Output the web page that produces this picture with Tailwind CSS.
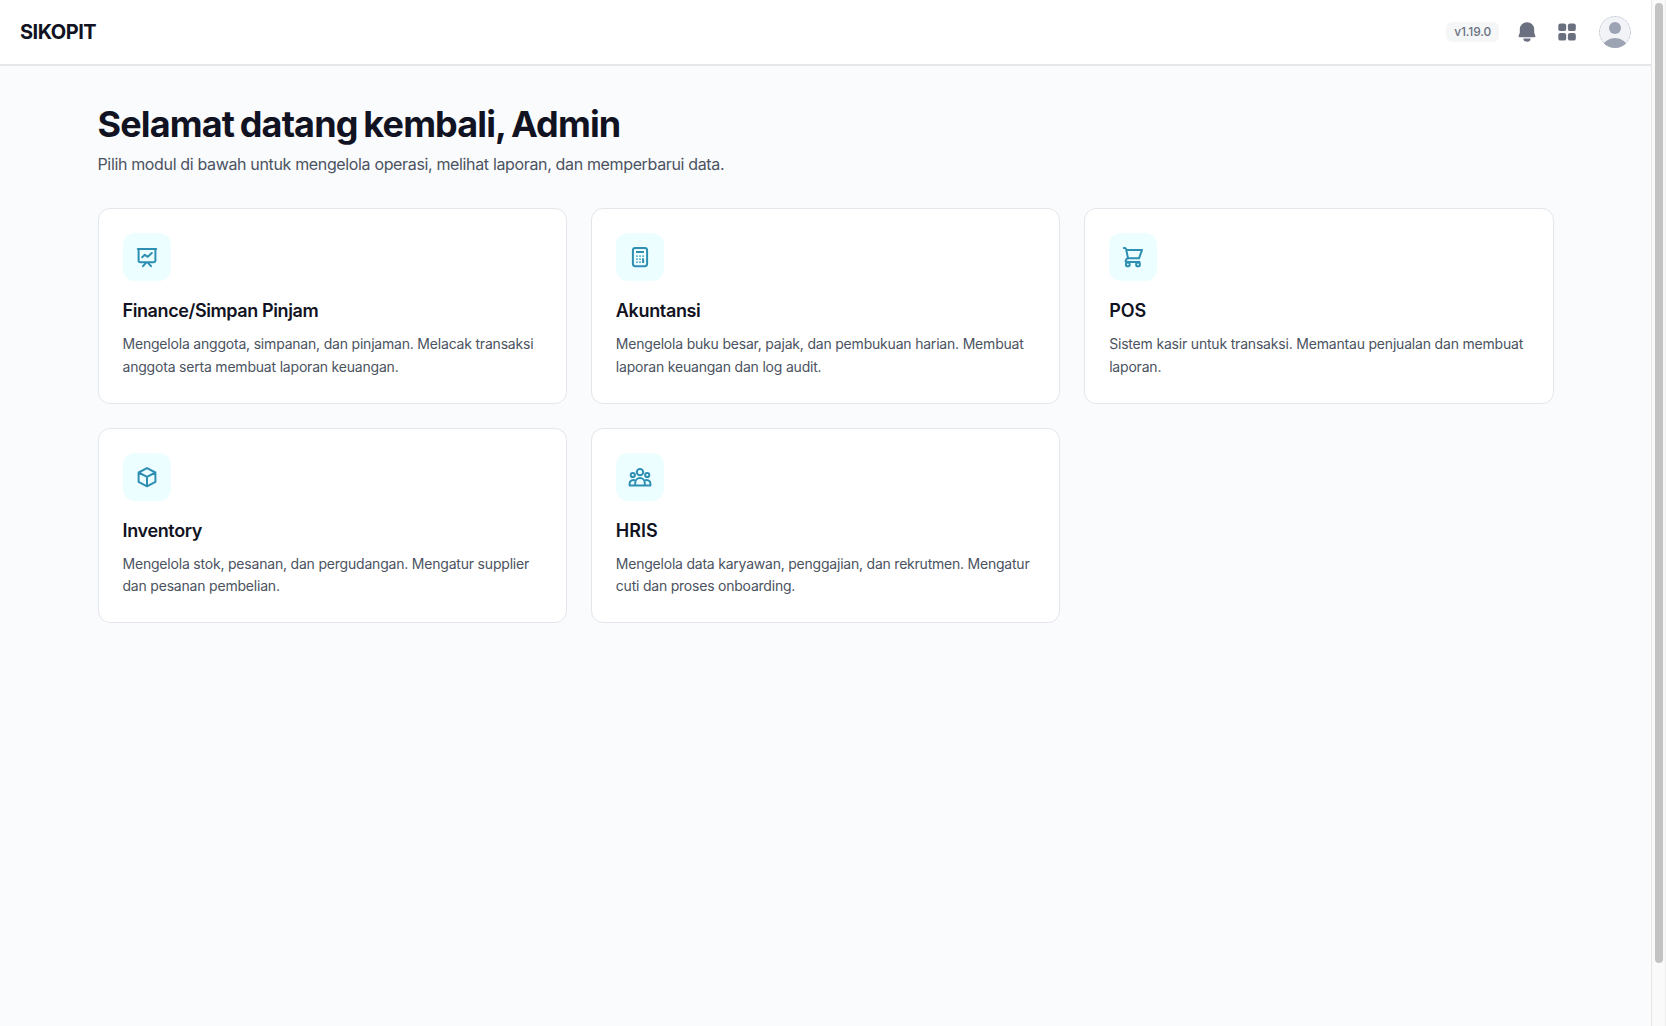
<!DOCTYPE html>
<html lang="id">
<head>
    <meta charset="utf-8">
    <title>SIKOPIT</title>
    <script src="https://cdn.jsdelivr.net/npm/@tailwindcss/browser@4"></script>
</head>
<body class="flex h-screen overflow-hidden bg-[#fafbfd] font-['Inter',sans-serif] text-[#111322] antialiased">
    <div class="flex-1 min-w-0">
        <header class="flex h-[66px] items-center justify-between border-b-2 border-[#e5e7ea] bg-white px-5">
            <a class="text-xl font-bold tracking-tight">SIKOPIT</a>
            <div class="flex items-center">
                <span class="rounded-md bg-[#f5f6f8] px-2 py-0.5 text-xs font-medium tracking-[-0.15px] text-[#6a7180]">v1.19.0</span>
                <svg class="ml-4 size-6 text-[#6a7080]" viewBox="0 0 24 24" fill="currentColor">
                    <path d="M12 2.2a7.2 7.2 0 0 0-7.2 7.2v3.4L3.7 15.8c-.3.8.2 1.4.9 1.4h14.8c.7 0 1.2-.6.9-1.4l-1.1-3V9.4A7.2 7.2 0 0 0 12 2.2Z"/>
                    <path d="M8.4 18.4h7.2a3.6 3.3 0 0 1-7.2 0Z"/>
                </svg>
                <svg class="ml-4 size-6 text-[#6a7080]" viewBox="0 0 24 24" fill="currentColor">
                    <rect x="3.3" y="3.4" width="7.9" height="7.7" rx="2.2"/>
                    <rect x="12.9" y="3.4" width="7.9" height="7.7" rx="2.2"/>
                    <rect x="3.3" y="12.9" width="7.9" height="7.7" rx="2.2"/>
                    <rect x="12.9" y="12.9" width="7.9" height="7.7" rx="2.2"/>
                </svg>
                <svg class="ml-5 size-8 rounded-full bg-[#f1f3f7]" viewBox="0 0 32 32" fill="#9ca3b2">
                    <circle cx="16" cy="12" r="6"/>
                    <ellipse cx="16" cy="32" rx="12.5" ry="10"/>
                    <circle cx="16" cy="16" r="15.6" fill="none" stroke="#a5abb8" stroke-width=".6" stroke-dasharray="3 1"/>
                </svg>
            </div>
        </header>

        <main class="mx-auto max-w-[1536px] px-10 pt-[38px]">
            <h1 class="text-4xl font-bold tracking-[-0.88px] [word-spacing:-1.8px]">Selamat datang kembali, Admin</h1>
            <p class="mt-2 text-base tracking-[-0.35px] text-[#4b5361]">Pilih modul di bawah untuk mengelola operasi, melihat laporan, dan memperbarui data.</p>

            <div class="mt-8 grid grid-cols-3 gap-6">
                <a class="rounded-xl border border-[#e3e6ea] bg-white p-6">
                    <div class="flex size-12 items-center justify-center rounded-xl bg-[#ecfeff] text-[#2f8fb3]">
                        <svg class="size-6" viewBox="0 0 24 24" fill="none" stroke="currentColor" stroke-width="2" stroke-linecap="round" stroke-linejoin="round">
                            <path d="M3.6 3.9v11.6a1.8 1.8 0 0 0 1.8 1.8h13.2a1.8 1.8 0 0 0 1.8-1.8V3.9M2.8 3.9h18.4M11 17.8l-3 3.4M13 17.8l3 3.4"/>
                            <path d="m7.2 12.2 2.6-2.4 3 2 4-3.8"/>
                        </svg>
                    </div>
                    <h2 class="mt-4 text-lg font-semibold tracking-[-0.4px]">Finance/Simpan Pinjam</h2>
                    <p class="mt-2 text-sm leading-relaxed tracking-[-0.2px] text-[#4b5361]">Mengelola anggota, simpanan, dan pinjaman. Melacak transaksi anggota serta membuat laporan keuangan.</p>
                </a>

                <a class="rounded-xl border border-[#e3e6ea] bg-white p-6">
                    <div class="flex size-12 items-center justify-center rounded-xl bg-[#ecfeff] text-[#2f8fb3]">
                        <svg class="size-6" viewBox="0 0 24 24" fill="none" stroke="currentColor" stroke-width="2">
                            <rect x="4.9" y="3" width="14.2" height="18.2" rx="2.4"/>
                            <path d="M8 7h8"/>
                            <path d="M8.1 11.2h1.7m1.4 0h1.7m1.4 0h1.7M8.1 14.2h1.7m1.4 0h1.7M8.1 17.2h1.7m1.4 0h1.7" stroke-width="1.7" opacity=".75"/>
                            <path d="M15.1 13.3V18"/>
                        </svg>
                    </div>
                    <h2 class="mt-4 text-lg font-semibold tracking-[-0.35px]">Akuntansi</h2>
                    <p class="mt-2 text-sm leading-relaxed tracking-[-0.2px] text-[#4b5361]">Mengelola buku besar, pajak, dan pembukuan harian. Membuat laporan keuangan dan log audit.</p>
                </a>

                <a class="rounded-xl border border-[#e3e6ea] bg-white p-6">
                    <div class="flex size-12 items-center justify-center rounded-xl bg-[#ecfeff] text-[#2f8fb3]">
                        <svg class="size-6" viewBox="0 0 24 24" fill="none" stroke="currentColor" stroke-width="2" stroke-linecap="round" stroke-linejoin="round">
                            <path d="M2.8 3h1c.7 0 1.1.4 1.3 1L7 13.3h11L21 4.9H5.3"/>
                            <path d="M7 13.3C4.6 13.9 4.2 16.9 5 16.9h13.6"/>
                            <circle cx="6.8" cy="19.4" r="1.9"/><circle cx="17" cy="19.4" r="1.9"/>
                        </svg>
                    </div>
                    <h2 class="mt-4 text-lg font-semibold">POS</h2>
                    <p class="mt-2 text-sm leading-relaxed tracking-[-0.19px] text-[#4b5361]">Sistem kasir untuk transaksi. Memantau penjualan dan membuat laporan.</p>
                </a>

                <a class="rounded-xl border border-[#e3e6ea] bg-white p-6">
                    <div class="flex size-12 items-center justify-center rounded-xl bg-[#ecfeff] text-[#2f8fb3]">
                        <svg class="size-6" viewBox="0 0 24 24" fill="none" stroke="currentColor" stroke-width="2" stroke-linecap="round" stroke-linejoin="round">
                            <path d="m20.4 7.5-8.4-4.4-8.4 4.4m16.8 0L12 11.9m8.4-4.4v9.4L12 21.3M3.6 7.5l8.4 4.4M3.6 7.5v9.4l8.4 4.4M12 11.9v9.4"/>
                        </svg>
                    </div>
                    <h2 class="mt-4 text-lg font-semibold tracking-[-0.35px]">Inventory</h2>
                    <p class="mt-2 text-sm leading-relaxed tracking-[-0.2px] text-[#4b5361]">Mengelola stok, pesanan, dan pergudangan. Mengatur supplier dan pesanan pembelian.</p>
                </a>

                <a class="rounded-xl border border-[#e3e6ea] bg-white p-6">
                    <div class="flex size-12 items-center justify-center rounded-xl bg-[#ecfeff] text-[#2f8fb3]">
                        <svg class="size-6" viewBox="0 0 24 24" fill="none" stroke="currentColor" stroke-width="2" stroke-linecap="round" stroke-linejoin="round">
                            <circle cx="12" cy="7.1" r="3.2"/><circle cx="4.8" cy="10" r="2.1"/><circle cx="19.2" cy="10" r="2.1"/>
                            <path d="M7.2 20.5v-2.6a4.8 4.8 0 0 1 9.6 0v2.6ZM7.2 15.4C4.2 14.4 1.6 16.2 1.6 18.6v1.9h5.6M16.8 15.4c3-1 5.6.8 5.6 3.2v1.9h-5.6"/>
                        </svg>
                    </div>
                    <h2 class="mt-4 text-lg font-semibold">HRIS</h2>
                    <p class="mt-2 text-sm leading-relaxed tracking-[-0.22px] text-[#4b5361]">Mengelola data karyawan, penggajian, dan rekrutmen. Mengatur cuti dan proses onboarding.</p>
                </a>
            </div>
        </main>
    </div>

    <!-- scrollbar -->
    <div class="w-[15px] shrink-0 border-x border-l-[#e6e6e6] border-r-[#efefef] bg-[#fafafa] pt-[3px] pl-[3px]">
        <div class="h-[960px] w-2 rounded-full bg-[#c3c3c3]"></div>
    </div>
</body>
</html>
